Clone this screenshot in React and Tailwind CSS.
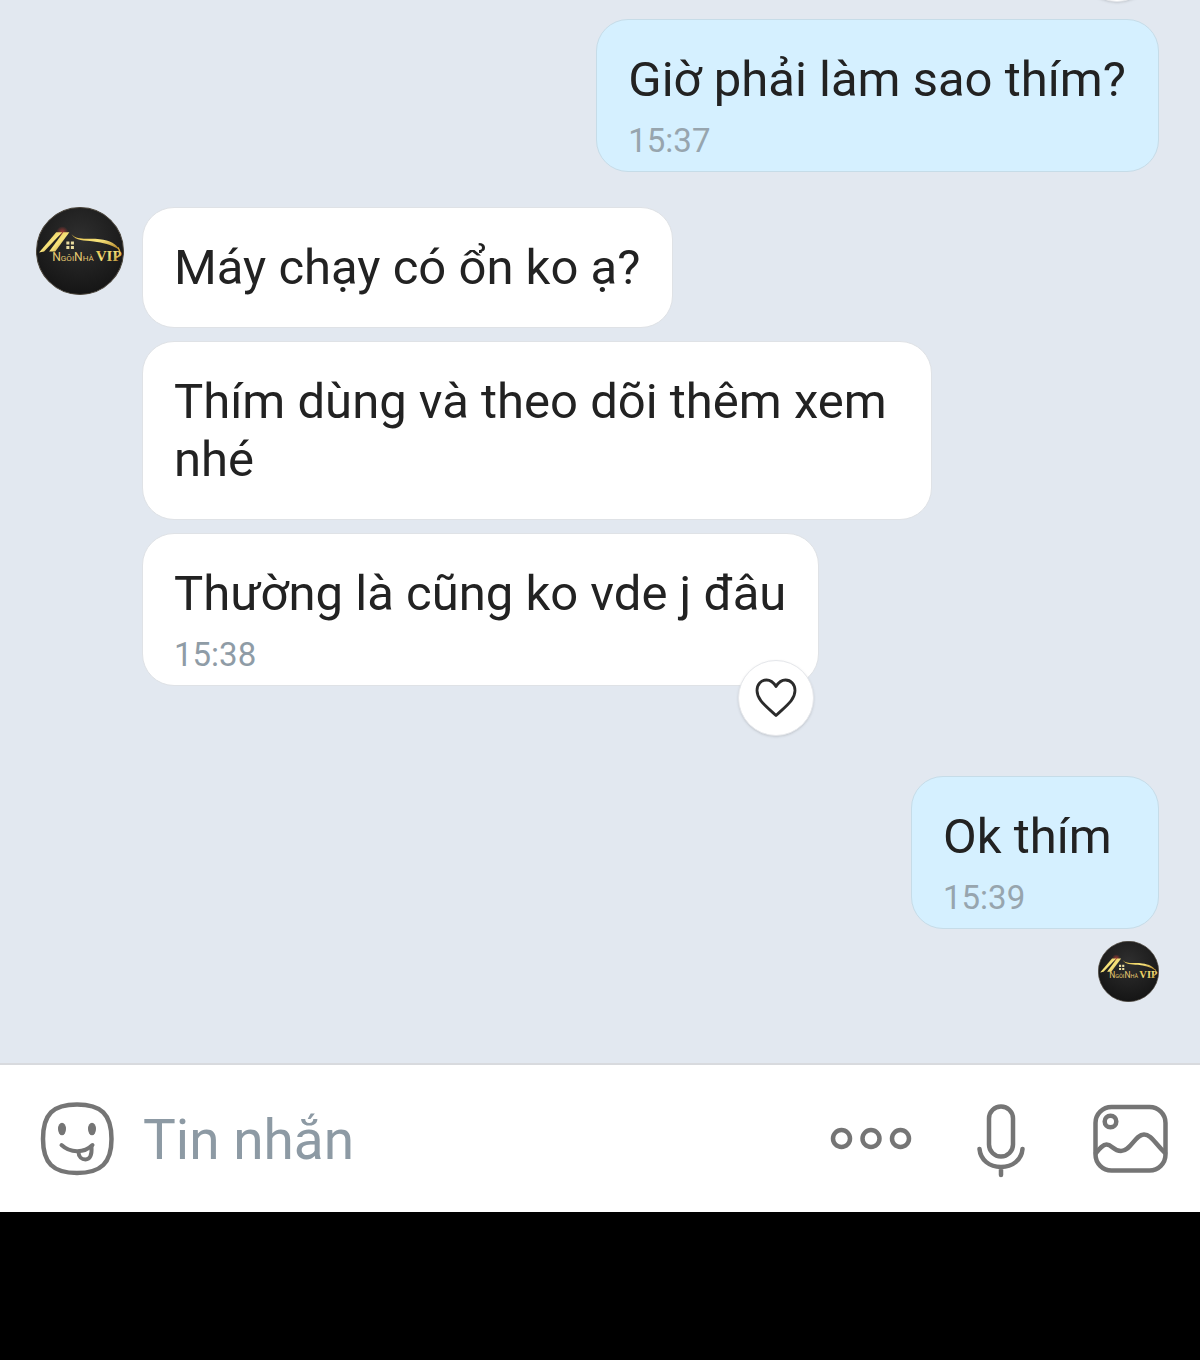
import React, { useState } from "react"

const messageGroups = [
  {
    id: 1,
    mine: true,
    messages: [{ id: 1, text: "Giờ phải làm sao thím?", time: "15:37" }],
  },
  {
    id: 2,
    mine: false,
    messages: [
      { id: 2, text: "Máy chạy có ổn ko ạ?" },
      { id: 3, text: "Thím dùng và theo dõi thêm xem nhé" },
      { id: 4, text: "Thường là cũng ko vde j đâu", time: "15:38", canReact: true },
    ],
  },
  {
    id: 3,
    mine: true,
    seen: true,
    messages: [{ id: 5, text: "Ok thím", time: "15:39" }],
  },
];

const Avatar = ({ className }) => {
  return (
    <svg className={className} viewBox="0 0 87 87" role="img" aria-label="Ngôi Nhà VIP">
      <defs>
        <linearGradient id="gold" x1="0" y1="0" x2="1" y2="1">
          <stop offset="0" stopColor="#e2b93c" />
          <stop offset="0.5" stopColor="#f7e37c" />
          <stop offset="1" stopColor="#a8791f" />
        </linearGradient>
        <radialGradient id="shade" cx="0.5" cy="0.35" r="0.65">
          <stop offset="0" stopColor="#2f2f2f" />
          <stop offset="1" stopColor="#151515" />
        </radialGradient>
        <radialGradient id="glow">
          <stop offset="0" stopColor="#a33b35" />
          <stop offset="1" stopColor="#a33b35" stopOpacity="0" />
        </radialGradient>
      </defs>
      <circle cx="43.5" cy="43.5" r="43" fill="url(#shade)" stroke="#4a443a" strokeWidth="1" />
      <circle cx="26" cy="25" r="6" fill="url(#glow)" />
      {/* roof */}
      <path d="M3 45 L20 25 L26 25 L8 44 Z" fill="url(#gold)" />
      <path d="M13 44 L27 25 L33 25 L19 44 Z" fill="url(#gold)" />
      <path d="M35 27 C42 34 52 30 63 32 C73 33 80 37 82 42 C74 37 66 35 57 34 C47 33 40 34 35 27 Z" fill="url(#gold)" />
      <path d="M81 40 C85 46 82 50 78 50" fill="none" stroke="#d9ab3a" strokeWidth="1.3" />
      {/* window */}
      <path d="M30 34h3v3h-3z M34.5 34h3v3h-3z M30 38.5h3v3h-3z M34.5 38.5h3v3h-3z" fill="#e9dca0" />
      <text x="16" y="53" fontFamily="Roboto, sans-serif" fontSize="8" fill="#e6ca72">
        <tspan fontSize="12">N</tspan>GÔI<tspan fontSize="12">N</tspan>HÀ
      </text>
      <text x="59" y="53" fontFamily="'Liberation Serif', serif" fontSize="15" fontWeight="bold" fill="url(#gold)">VIP</text>
    </svg>
  );
}

const ReactionButton = ({ className }) => {
  return (
    <button type="button" aria-label="Thả tim"
      className={`absolute right-1 flex items-center justify-center w-[76px] h-[76px] rounded-full bg-white border border-gray-200 shadow-sm ${className}`}>
      <svg className="w-[42px] h-[40px]" viewBox="0 0 42 40" fill="none" stroke="#2b2b2b" strokeWidth="2.8" strokeLinejoin="round">
        <path d="M21 8.5 C18 3.5 14.5 2 11.5 2 C6 2 2 6.5 2 12.5 C2 22 11 28 21 37.5 C31 28 40 22 40 12.5 C40 6.5 36 2 30.5 2 C27.5 2 24 3.5 21 8.5 Z" />
      </svg>
    </button>
  );
}

const Bubble = ({ message, mine }) => {
  return (
    <div className={mine ? "relative min-w-[248px] max-w-[790px] rounded-[32px] border border-[#c6dce8] bg-[#d5f0ff] pl-[31px] pr-8 pt-[31px]" :
      "relative min-w-[248px] max-w-[790px] rounded-[32px] border border-[#dfe2e6] bg-white pl-[31px] pr-8 pt-[31px]"}>
      <p className="text-[49px] leading-[58px] text-[#222222]">{message.text}</p>
      {message.time ? (
        <time className={mine ? "block mt-3 mb-[10px] text-[33px] leading-[40px] text-[#97a5ae]" :
          "block mt-3 mb-[10px] text-[33px] leading-[40px] text-[#8f9ca6]"}>{message.time}</time>
      ) : <div className="h-[30px]"></div>}
      {message.canReact && <ReactionButton className="-bottom-[51px]" />}
    </div>
  );
}

const ChatPage = () => {
  const [draft, setDraft] = useState("");

  return (
    <div className="flex flex-col w-full min-h-screen bg-black font-['Roboto',sans-serif]">
      <main className="relative flex flex-col flex-1 overflow-hidden bg-[#e2e8f0] pl-9 pr-[41px] pt-[19px]">
        {/* reaction of the message scrolled out above */}
        <div className="absolute top-0 right-[41px]">
          <ReactionButton className="-bottom-[2px]" />
        </div>
        {messageGroups.map((group) => (
          group.mine ? (
            <section key={group.id} className="flex flex-col items-end gap-3 mb-[35px]">
              {group.messages.map((message) => <Bubble key={message.id} message={message} mine />)}
              {group.seen && <Avatar className="w-[61px] h-[61px]" />}
            </section>
          ) : (
            <section key={group.id} className="flex items-start gap-[18px] mb-[90px]">
              <Avatar className="w-[88px] h-[88px] shrink-0" />
              <div className="flex flex-col items-start gap-[13px] min-w-0">
                {group.messages.map((message) => <Bubble key={message.id} message={message} />)}
              </div>
            </section>
          )
        ))}
      </main>
      <form className="flex items-center h-[149px] bg-white border-t-2 border-[#d8dade] pl-10 pr-8 text-[#757575]" onSubmit={(e) => e.preventDefault()}>
        <button type="button" aria-label="Biểu tượng cảm xúc" className="shrink-0">
          <svg className="w-[74px] h-[74px]" viewBox="0 0 74 74" fill="none" stroke="currentColor" strokeWidth="4.5" strokeLinecap="round" strokeLinejoin="round">
            <path d="M37 2.5 C61 2.5 71.5 12 71.5 37 C71.5 61 61 71 37 71 C13 71 3 61 3 37 C3 12 13 2.5 37 2.5 Z" />
            <ellipse cx="22" cy="27" rx="4" ry="6.3" fill="currentColor" stroke="none" />
            <ellipse cx="52" cy="27" rx="4" ry="6.3" fill="currentColor" stroke="none" />
            <path d="M21.5 43 C30 51 44 51.5 52.5 43" strokeWidth="4" />
            <path d="M38.5 50 C38.5 55 42 57.5 45.5 57.5 C50 57.5 52 53 51.5 45" strokeWidth="4" />
          </svg>
        </button>
        <input className="flex-1 min-w-0 ml-[29px] h-20 pt-[2px] text-[55px] leading-[66px] text-[#222222] placeholder:text-[#8d9aa4] placeholder:opacity-100 outline-none"
          type="text" aria-label="Tin nhắn" placeholder="Tin nhắn" value={draft} onChange={(e) => setDraft(e.target.value)} />
        <div className="flex items-center gap-[66px] shrink-0">
          <button type="button" aria-label="Thêm">
            <svg className="w-[82px] h-[24px] overflow-visible" viewBox="0 0 82 24" fill="none" stroke="currentColor" strokeWidth="4.5">
              <circle cx="13.5" cy="11.5" r="8.5" />
              <circle cx="43" cy="11.5" r="8.5" />
              <circle cx="72.5" cy="11.5" r="8.5" />
            </svg>
          </button>
          <button type="button" aria-label="Ghi âm">
            <svg className="w-[50px] h-[80px]" viewBox="0 0 50 80" fill="none" stroke="currentColor" strokeWidth="4.5" strokeLinecap="round">
              <rect x="13" y="7.5" width="24" height="50" rx="12" />
              <path d="M3.5 50 C4.5 61 13.5 68 25 68 C36.5 68 45.5 61 46.5 50 M25 69 V76" />
            </svg>
          </button>
          <button type="button" aria-label="Hình ảnh">
            <svg className="w-[76px] h-[70px]" viewBox="0 0 76 70" fill="none" stroke="currentColor" strokeWidth="4.5" strokeLinecap="round">
              <rect x="3.5" y="3" width="70" height="63.5" rx="16" />
              <circle cx="18.5" cy="17.5" r="5.8" />
              <path d="M4 49 C8 44 11 40.5 14.5 40.5 C20 40.5 21 47 29 47 C39 47 43 30.5 52 30.5 C59 30.5 62 38 73 49" />
            </svg>
          </button>
        </div>
      </form>
      <footer className="h-[148px] bg-black"></footer>
    </div>
  );
}

export default ChatPage;
